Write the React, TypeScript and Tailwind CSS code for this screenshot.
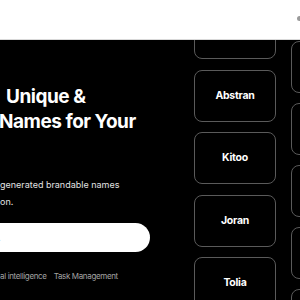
import React from 'react';

const leftColumn = ['', 'Abstran', 'Kitoo', 'Joran', 'Tolia'];
const rightColumn = ['', '', '', '', '', ''];

function NameCard({ name }: { name: string }) {
  return (
    <div className="h-[52px] w-[82px] shrink-0 rounded-lg border border-[#5a5a5a] bg-black flex items-center justify-center">
      <span className="text-[10.5px] font-bold text-white tracking-tight">{name}</span>
    </div>
  );
}

export default function App() {
  return (
    <div className="w-[300px] h-[300px] overflow-hidden bg-black flex flex-col font-['Inter',sans-serif]">
      {/* Top nav */}
      <header className="h-10 shrink-0 bg-white border-b border-[#d9d9d9] flex items-center justify-end">
        <span className="w-[3px] h-[5px] bg-[#9a9a9a] rounded-l-sm mb-[2px]" />
      </header>

      {/* Hero */}
      <section className="flex-1 flex overflow-hidden">
        <div className="w-[194px] shrink-0 flex flex-col pt-[44px] whitespace-nowrap">
          <h1 className="text-[19px] leading-[25px] font-bold text-white tracking-tight">
            <div className="pl-[6px]">Unique &amp;</div>
            <div className="-ml-[1px]">Names for Your</div>
          </h1>
          <p className="mt-[43px] text-[9px] leading-[16.5px] text-[#e2e2e2]">
            <span className="block">generated brandable names</span>
            <span className="block">on.</span>
          </p>
          <div className="mt-[13px] h-[29px] w-[150px] shrink-0 bg-white rounded-r-full flex items-center">
            <span className="text-[10px] text-[#9a9a9a] -ml-[2px]">.</span>
          </div>
          <div className="mt-[18px] flex gap-[7px] text-[8px] leading-[12px] tracking-[-0.35px] text-[#a3a3a3]">
            <span>al intelligence</span>
            <span>Task Management</span>
          </div>
        </div>

        <div className="flex gap-[15px]">
          <div className="flex flex-col gap-[10.5px] -mt-[33px]">
            {leftColumn.map((n, i) => (
              <NameCard key={i} name={n} />
            ))}
          </div>
          <div className="flex flex-col gap-[10px] mt-[1px]">
            {rightColumn.map((n, i) => (
              <NameCard key={i} name={n} />
            ))}
          </div>
        </div>
      </section>
    </div>
  );
}
